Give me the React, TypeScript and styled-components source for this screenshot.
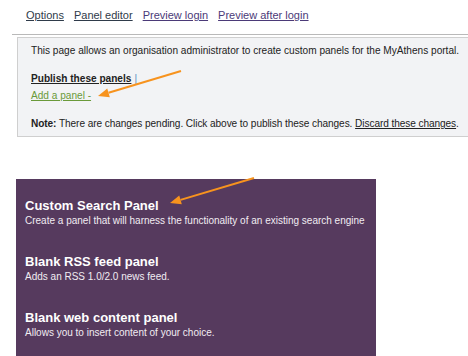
import styled, { createGlobalStyle } from "styled-components";

const GlobalStyle = createGlobalStyle`
  html, body {
    margin: 0;
    padding: 0;
    background: #fff;
    overflow: hidden;
  }
  body {
    font-family: "Liberation Sans", Arial, sans-serif;
    color: #222;
  }
`;

const Page = styled.div`
  position: relative;
  width: 468px;
  height: 356px;
  overflow: hidden;
`;

const Nav = styled.nav`
  display: flex;
  gap: 10px;
  height: 30px;
  align-items: center;
  padding-bottom: 4px;
  margin-left: 12px;
  padding-left: 14px;
  border-bottom: 1px solid #b9b9b9;
  font-size: 11px;
`;

const NavLink = styled.a<{ visited?: boolean }>`
  color: ${(p) => (p.visited ? "#4b3a78" : "#2f3b4a")};
  text-decoration: underline;
  cursor: pointer;
`;

const InfoBox = styled.div`
  margin: 2px -4px 0 17px;
  border: 1px solid #cfcfcf;
  background: #f2f3f5;
  padding: 6px 13px 5px;
  font-size: 10.1px;
  line-height: 14px;
  color: #222;
  white-space: nowrap;
`;

const Para = styled.p<{ top?: number }>`
  margin: ${(p) => p.top ?? 0}px 0 0;
`;

const NoteLine = styled(Para)`
  letter-spacing: -0.08px;
`;

const PublishLink = styled.a`
  font-weight: bold;
  color: #222;
  text-decoration: underline;
`;

const Sep = styled.span`
  color: #5a8fc0;
  margin-left: 3px;
`;

const AddLink = styled.a`
  color: #6a9a3a;
  text-decoration: underline;
`;

const PlainLink = styled.a`
  color: #222;
  text-decoration: underline;
`;

const PanelList = styled.div`
  margin: 42px 0 0 16px;
  width: 360px;
  height: 180px;
  background: #563a5e;
  padding: 18px 0 0 9px;
  box-sizing: border-box;
  display: flex;
  flex-direction: column;
  gap: 26px;
  color: #fff;
`;

const PanelItem = styled.div`
  display: flex;
  flex-direction: column;
`;

const PanelTitle = styled.div`
  font-weight: bold;
  font-size: 13px;
  line-height: 18px;
`;

const PanelDesc = styled.div`
  font-size: 10px;
  line-height: 12px;
  color: #f1ecf2;
  white-space: nowrap;
`;

const ArrowLayer = styled.svg`
  position: absolute;
  left: 0;
  top: 0;
  pointer-events: none;
`;

const Arrow = ({ x1, y1, x2, y2 }: { x1: number; y1: number; x2: number; y2: number }) => {
  const a = Math.atan2(y2 - y1, x2 - x1);
  const len = 11;
  const w = 4.5;
  const bx = x2 - len * Math.cos(a);
  const by = y2 - len * Math.sin(a);
  const px = -Math.sin(a) * w;
  const py = Math.cos(a) * w;
  return (
    <g>
      <line x1={x1} y1={y1} x2={bx} y2={by} stroke="#f7931e" strokeWidth={2} />
      <polygon points={`${x2},${y2} ${bx + px},${by + py} ${bx - px},${by - py}`} fill="#f7931e" />
    </g>
  );
};

const panels = [
  {
    title: "Custom Search Panel",
    desc: "Create a panel that will harness the functionality of an existing search engine",
  },
  { title: "Blank RSS feed panel", desc: "Adds an RSS 1.0/2.0 news feed." },
  { title: "Blank web content panel", desc: "Allows you to insert content of your choice." },
];

export default function App() {
  return (
    <Page>
      <GlobalStyle />
      <Nav>
        <NavLink>Options</NavLink>
        <NavLink>Panel editor</NavLink>
        <NavLink visited>Preview login</NavLink>
        <NavLink visited>Preview after login</NavLink>
      </Nav>
      <InfoBox>
        <Para>This page allows an organisation administrator to create custom panels for the MyAthens portal.</Para>
        <Para top={14}>
          <PublishLink>Publish these panels</PublishLink>
          <Sep>|</Sep>
        </Para>
        <Para top={3}>
          <AddLink>Add a panel -</AddLink>
        </Para>
        <NoteLine top={14}>
          <b>Note:</b> There are changes pending. Click above to publish these changes.{" "}
          <PlainLink>Discard these changes</PlainLink>.
        </NoteLine>
      </InfoBox>
      <PanelList>
        {panels.map((p) => (
          <PanelItem key={p.title}>
            <PanelTitle>{p.title}</PanelTitle>
            <PanelDesc>{p.desc}</PanelDesc>
          </PanelItem>
        ))}
      </PanelList>
      <ArrowLayer width={468} height={356}>
        <Arrow x1={181} y1={71} x2={98} y2={96} />
        <Arrow x1={254} y1={178} x2={170} y2={203} />
      </ArrowLayer>
    </Page>
  );
}
